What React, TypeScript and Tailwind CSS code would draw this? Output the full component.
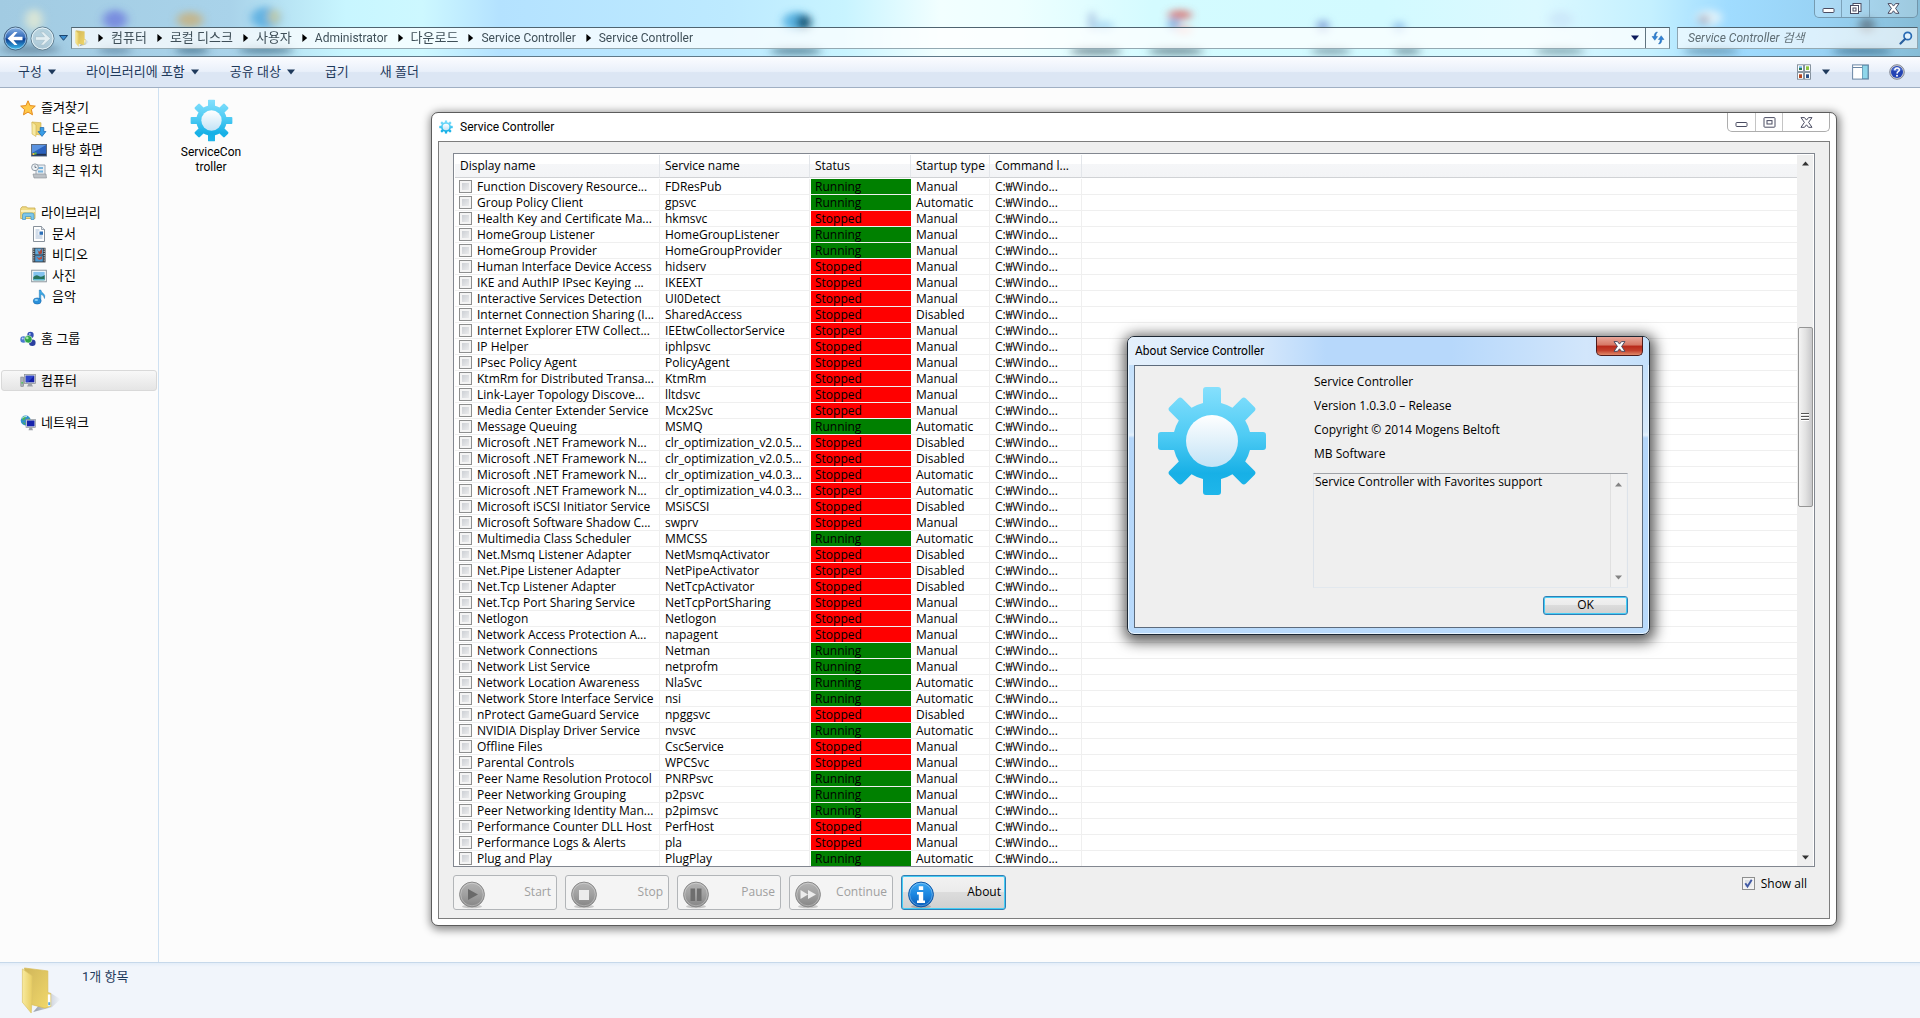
import React, { useId, useState } from "react";

const UI_FONT = "font-[Roboto,'Noto_Sans_CJK_KR',sans-serif]";
const LIST_FONT = "font-['Open_Sans','Noto_Sans_CJK_KR',sans-serif]";

type State = "R" | "S";
type Startup = "M" | "A" | "D";
const STARTUP = { M: "Manual", A: "Automatic", D: "Disabled" };

const SERVICES: [string, string, State, Startup][] = [
  ["Function Discovery Resource...", "FDResPub", "R", "M"],
  ["Group Policy Client", "gpsvc", "R", "A"],
  ["Health Key and Certificate Ma...", "hkmsvc", "S", "M"],
  ["HomeGroup Listener", "HomeGroupListener", "R", "M"],
  ["HomeGroup Provider", "HomeGroupProvider", "R", "M"],
  ["Human Interface Device Access", "hidserv", "S", "M"],
  ["IKE and AuthIP IPsec Keying ...", "IKEEXT", "S", "M"],
  ["Interactive Services Detection", "UI0Detect", "S", "M"],
  ["Internet Connection Sharing (I...", "SharedAccess", "S", "D"],
  ["Internet Explorer ETW Collect...", "IEEtwCollectorService", "S", "M"],
  ["IP Helper", "iphlpsvc", "S", "M"],
  ["IPsec Policy Agent", "PolicyAgent", "S", "M"],
  ["KtmRm for Distributed Transa...", "KtmRm", "S", "M"],
  ["Link-Layer Topology Discove...", "lltdsvc", "S", "M"],
  ["Media Center Extender Service", "Mcx2Svc", "S", "M"],
  ["Message Queuing", "MSMQ", "R", "A"],
  ["Microsoft .NET Framework N...", "clr_optimization_v2.0.5...", "S", "D"],
  ["Microsoft .NET Framework N...", "clr_optimization_v2.0.5...", "S", "D"],
  ["Microsoft .NET Framework N...", "clr_optimization_v4.0.3...", "S", "A"],
  ["Microsoft .NET Framework N...", "clr_optimization_v4.0.3...", "S", "A"],
  ["Microsoft iSCSI Initiator Service", "MSiSCSI", "S", "D"],
  ["Microsoft Software Shadow C...", "swprv", "S", "M"],
  ["Multimedia Class Scheduler", "MMCSS", "R", "A"],
  ["Net.Msmq Listener Adapter", "NetMsmqActivator", "S", "D"],
  ["Net.Pipe Listener Adapter", "NetPipeActivator", "S", "D"],
  ["Net.Tcp Listener Adapter", "NetTcpActivator", "S", "D"],
  ["Net.Tcp Port Sharing Service", "NetTcpPortSharing", "S", "M"],
  ["Netlogon", "Netlogon", "S", "M"],
  ["Network Access Protection A...", "napagent", "S", "M"],
  ["Network Connections", "Netman", "R", "M"],
  ["Network List Service", "netprofm", "R", "M"],
  ["Network Location Awareness", "NlaSvc", "R", "A"],
  ["Network Store Interface Service", "nsi", "R", "A"],
  ["nProtect GameGuard Service", "npggsvc", "S", "D"],
  ["NVIDIA Display Driver Service", "nvsvc", "R", "A"],
  ["Offline Files", "CscService", "S", "M"],
  ["Parental Controls", "WPCSvc", "S", "M"],
  ["Peer Name Resolution Protocol", "PNRPsvc", "R", "M"],
  ["Peer Networking Grouping", "p2psvc", "R", "M"],
  ["Peer Networking Identity Man...", "p2pimsvc", "R", "M"],
  ["Performance Counter DLL Host", "PerfHost", "S", "M"],
  ["Performance Logs & Alerts", "pla", "S", "M"],
  ["Plug and Play", "PlugPlay", "R", "A"],
];

function Gear({ className }: { className: string }) {
  const id = useId();
  return (
    <svg viewBox="-55 -55 110 110" className={className} aria-hidden="true">
      <defs>
        <linearGradient id={id + "g"} gradientUnits="userSpaceOnUse" x1="0" y1="-54" x2="0" y2="54">
          <stop offset="0" stopColor="#86e0fd" />
          <stop offset="0.45" stopColor="#4ecbf4" />
          <stop offset="0.8" stopColor="#17b0e6" />
          <stop offset="1" stopColor="#1fb6ea" />
        </linearGradient>
        <linearGradient id={id + "h"} x1="0" y1="0" x2="0" y2="1">
          <stop offset="0" stopColor="#ffffff" />
          <stop offset="1" stopColor="#c3e3f6" />
        </linearGradient>
        <clipPath id={id + "c"}>
          <circle r="39" />
          {[0, 45, 90, 135].map((a) => (
            <rect key={a} x="-9" y="-54" width="18" height="108" rx="3" transform={`rotate(${a})`} />
          ))}
        </clipPath>
      </defs>
      <rect x="-55" y="-55" width="110" height="110" fill={`url(#${id}g)`} clipPath={`url(#${id}c)`} />
      <circle r="26" fill={`url(#${id}h)`} />
    </svg>
  );
}

function FolderIcon({ className }: { className: string }) {
  const id = useId();
  return (
    <svg viewBox="0 0 40 48" className={className} aria-hidden="true">
      <defs>
        <linearGradient id={id + "a"} x1="0" y1="0" x2="1" y2="0">
          <stop offset="0" stopColor="#f8ea9e" />
          <stop offset="1" stopColor="#e8cd62" />
        </linearGradient>
        <linearGradient id={id + "b"} x1="0" y1="0" x2="1" y2="1">
          <stop offset="0" stopColor="#d0b65a" />
          <stop offset="1" stopColor="#f2d96b" />
        </linearGradient>
        <linearGradient id={id + "s"} x1="0" y1="0" x2="1" y2="0">
          <stop offset="0" stopColor="#7f8896" stopOpacity=".8" />
          <stop offset="1" stopColor="#7f8896" stopOpacity="0" />
        </linearGradient>
      </defs>
      <path d="M12 46 31 41 40 33 29 26z" fill={`url(#${id}s)`} />
      <path d="M3 1 27 4v22l3 1v13l-6 2-15-4z" fill={`url(#${id}b)`} stroke="#d9bd55" strokeWidth=".7" />
      <path d="M1 2 11 9v22l-1 16L1 36z" fill={`url(#${id}a)`} stroke="#dcc566" strokeWidth=".7" />
      <rect x="27" y="28" width="2.6" height="12" fill="#fff" />
      <rect x="27.4" y="36" width="2" height="3" fill="#55a7e0" />
    </svg>
  );
}

function Triangle({ className, dir = "down" }: { className: string; dir?: "down" | "up" | "right" }) {
  const d = dir === "down" ? "M0 2h10L5 8z" : dir === "up" ? "M0 8h10L5 2z" : "M3 0v10l6-5z";
  return (
    <svg viewBox="0 0 10 10" className={className} aria-hidden="true">
      <path d={d} fill="currentColor" />
    </svg>
  );
}

const NAV_ICONS: Record<string, React.ReactNode> = {
  star: <path d="M8 .8l2.1 4.8 5.2.5-3.9 3.5 1.1 5.2L8 12.1l-4.5 2.7 1.1-5.2L.7 6.1l5.2-.5z" fill="#ffc94a" stroke="#e58a1c" strokeWidth="1" />,
  download: (
    <>
      <path d="M1 1l9 .7V14l-8-1z" fill="#ecd272" stroke="#c9a941" strokeWidth=".6" />
      <path d="M1 1l4 3v11.5L1 13z" fill="#f8eaa2" stroke="#cfb452" strokeWidth=".6" />
      <path d="M9.200 6.500h3.600v4H15L11 15.400 7 10.500h2.200z" fill="#3a9de6" stroke="#1a66ac" strokeWidth=".7" />
    </>
  ),
  desktop: (
    <>
      <rect x=".5" y="2.500" width="15" height="11.500" fill="#2b62bd" stroke="#5d6a7c" />
      <path d="M1 3h14L1 11z" fill="#5b93e0" />
      <rect x="1" y="11.800" width="14" height="1.800" fill="#22334f" />
      <path d="M1.500 11h2v2h-2z" fill="#f0c040" />
      <path d="M3.500 10.500h2v2h-2z" fill="#5cc04a" />
    </>
  ),
  recent: (
    <>
      <path d="M5 2h9v10H5z" fill="#e9eef3" stroke="#8996a3" strokeWidth=".8" />
      <path d="M7 4h5v2H7zM7 7.500h5v2H7z" fill="#76b2dc" />
      <path d="M2 11h13l.5 4H3z" fill="#bcc1c6" stroke="#868d94" strokeWidth=".6" />
      <circle cx="4" cy="4.300" r="3.400" fill="#edf2f6" stroke="#8a949e" strokeWidth=".9" />
      <path d="M4 2.500v2h1.500" fill="none" stroke="#55606c" strokeWidth=".8" />
    </>
  ),
  library: (
    <>
      <path d="M.7 3.500 2 1.800h4.500L7.500 3H15v10.500H.7z" fill="#f1dc86" stroke="#c8a94a" strokeWidth=".8" />
      <path d="M1 5h14v2H1z" fill="#faf0bd" />
      <path d="M2.500 14.500V10q0-2 2-2h7.500q2 0 2 2v4.500h-3V11.500H5.500v3z" fill="#7cc6ea" stroke="#4392bd" strokeWidth=".7" />
    </>
  ),
  doc: (
    <>
      <path d="M2.500.5h8l3 3v12h-11z" fill="#fff" stroke="#7a8490" strokeWidth=".9" />
      <path d="M10.500.5v3h3" fill="#dfe6ec" stroke="#7a8490" strokeWidth=".7" />
      <path d="M4.500 4h4M4.500 6h3M4.500 8h3M4.500 10h7M4.500 12h7" stroke="#9bb2cf" strokeWidth=".9" />
      <rect x="8.500" y="5.500" width="3.500" height="3.300" fill="#2d6fb8" />
    </>
  ),
  video: (
    <>
      <rect x="1.500" y=".8" width="13" height="14.600" fill="#30363e" />
      <rect x="4.200" y="1.500" width="7.600" height="6" fill="#5fabdc" />
      <rect x="4.200" y="8.500" width="7.600" height="6" fill="#4a99d2" />
      <path d="M6 1.500 8 5l3-3.500v5L8 7.500z" fill="#a9473a" />
      <path d="M5 9.500l3 1.500 3-2v3l-3 1z" fill="#b45042" />
      <path d="M2.800 1.500v13.500M13.200 1.500v13.500" stroke="#e8eef2" strokeWidth="1" strokeDasharray="1.200 1" />
    </>
  ),
  photo: (
    <>
      <rect x=".7" y="2.200" width="14.600" height="11.600" fill="#fff" stroke="#7f8a94" strokeWidth=".9" />
      <rect x="2.300" y="3.800" width="11.400" height="8.400" fill="#83c3ee" />
      <path d="M2.300 9q3-3 5.500-1t5.900-1v5.200H2.300z" fill="#27735c" />
      <path d="M2.300 11h11.400v1.200H2.300z" fill="#5cb6cf" />
    </>
  ),
  music: (
    <>
      <path d="M8.300 1h1.500q.3 2 2.500 3.500t1.200 5q-.4-3.500-3.700-4.300V12H8.300z" fill="#3aa6e4" stroke="#1f78b8" strokeWidth=".5" />
      <ellipse cx="6.200" cy="12" rx="4" ry="3.100" fill="#2a90da" stroke="#1763a4" strokeWidth=".5" />
      <ellipse cx="5.300" cy="11" rx="1.800" ry="1" fill="#8fd4f7" />
    </>
  ),
  homegroup: (
    <>
      <circle cx="10.500" cy="4" r="3.200" fill="#3450b4" />
      <circle cx="3.500" cy="8.500" r="3.200" fill="#4a78d0" />
      <circle cx="12.300" cy="11.800" r="3.300" fill="#2b40a0" />
      <circle cx="8.300" cy="8.300" r="3.800" fill="#2fa64a" stroke="#e9f6ec" strokeWidth=".6" />
      <circle cx="7.300" cy="7" r="1.300" fill="#a8e8a4" />
      <circle cx="9.800" cy="3" r="1" fill="#a9bdf2" />
      <circle cx="2.700" cy="7.500" r="1" fill="#c4d6f8" />
    </>
  ),
  computer: (
    <>
      <rect x=".8" y="4" width="2.800" height="9.500" fill="#a9b0b6" stroke="#70777d" strokeWidth=".5" />
      <rect x="1.500" y="9" width="1.300" height="1.600" fill="#3ecb4c" />
      <rect x="4.500" y="1.500" width="11" height="9" fill="#d3d7db" stroke="#83898f" strokeWidth=".7" />
      <rect x="5.700" y="2.700" width="8.600" height="6.600" fill="#1420a8" />
      <path d="M5.700 2.700h8.600L8 9.300H5.700z" fill="#3f5fe0" opacity=".6" />
      <path d="M8.500 10.500h3l1.500 3H7z" fill="#9ea3a8" />
    </>
  ),
  network: (
    <>
      <circle cx="5.700" cy="5.500" r="5" fill="#2f8ed0" />
      <path d="M2 3q2-2.500 4.500-2L5 4 3 6zM6.500 5l3-2 1 3-3 3zM2 7l3 1v2z" fill="#46b552" />
      <path d="M1.500 3.500Q4 1 7 1.500" stroke="#c9ecf8" fill="none" strokeWidth=".9" />
      <rect x="6" y="4.500" width="9.500" height="8" fill="#d3d9df" stroke="#7f878f" strokeWidth=".6" />
      <rect x="7" y="5.500" width="7.500" height="5.800" fill="#1724ad" />
      <path d="M9.500 12.500h2.500l1 2.800H8.500z" fill="#9aa1a8" />
    </>
  ),
};

const NAV: ([string, string, 0 | 1] | null)[] = [
  ["star", "즐겨찾기", 0],
  ["download", "다운로드", 1],
  ["desktop", "바탕 화면", 1],
  ["recent", "최근 위치", 1],
  null,
  ["library", "라이브러리", 0],
  ["doc", "문서", 1],
  ["video", "비디오", 1],
  ["photo", "사진", 1],
  ["music", "음악", 1],
  null,
  ["homegroup", "홈 그룹", 0],
  null,
  ["computer", "컴퓨터", 0],
  null,
  ["network", "네트워크", 0],
];

function Sidebar() {
  return (
    <nav className="w-[159px] shrink-0 border-r border-[#cfe1f2] pt-[9px] text-[13px] text-black">
      <ul>
        {NAV.map((item, i) =>
          item ? (
            <li key={i} className="h-[21px]">
              <a
                href="#"
                className={
                  "mx-px flex h-[21px] items-center gap-[5px] rounded-[3px] border whitespace-nowrap " +
                  (item[2] ? "pl-[29px] " : "pl-[18px] ") +
                  (item[0] === "computer"
                    ? "border-[#d9d9d9] bg-linear-to-b from-[#f8f8f8] to-[#e5e5e5]"
                    : "border-transparent")
                }
              >
                <svg viewBox="0 0 16 16" className="size-4 shrink-0" aria-hidden="true">
                  {NAV_ICONS[item[0]]}
                </svg>
                <span>{item[1]}</span>
              </a>
            </li>
          ) : (
            <li key={i} className="h-[21px]" aria-hidden="true" />
          ),
        )}
      </ul>
    </nav>
  );
}

/* Blurred desktop that shows through the glass title bar. */
function Glass() {
  const spots: [number, number, number, number, string][] = [
    [34, 20, 9, 11, "#e8ecd2"],
    [115, 20, 12, 10, "#6b78dc"],
    [190, 20, 13, 8, "#cbae72"],
    [266, 18, 15, 11, "#4aa5dd"],
    [274, 17, 5, 8, "#e6d488"],
    [797, 22, 14, 10, "#3aa0d8"],
    [804, 23, 7, 8, "#0a3550"],
    [1092, 22, 3, 11, "#8fa8d4"],
    [1104, 27, 10, 6, "#a4d4f2"],
    [1180, 15, 12, 5, "#d8605c"],
    [1174, 25, 6, 7, "#6f9ed8"],
    [1184, 31, 8, 5, "#f4b0a8"],
    [1323, 27, 6, 7, "#7392d0"],
    [1399, 28, 6, 6, "#7fb0e4"],
    [1561, 20, 12, 9, "#c9e4f8"],
    [1709, 18, 13, 8, "#f0f7fa"],
    [1704, 20, 5, 5, "#9b9bb0"],
    [1867, 26, 8, 8, "#5b6f7c"],
    [30, 50, 30, 4, "#5b7a92"],
    [115, 51, 17, 4, "#5f86a2"],
    [192, 51, 17, 4, "#3f6884"],
    [266, 51, 28, 4, "#3f6884"],
    [796, 52, 26, 4, "#3d6a80"],
    [1096, 52, 26, 4, "#56707c"],
    [1176, 52, 28, 4, "#56707c"],
    [1331, 52, 20, 4, "#6f8f9c"],
    [1407, 52, 14, 4, "#5f8190"],
    [1560, 52, 25, 4, "#6f949f"],
    [1711, 52, 28, 4, "#5d8ba6"],
    [1862, 52, 30, 4, "#3f6f8c"],
  ];
  return (
    <div className="absolute inset-0 overflow-hidden bg-[linear-gradient(90deg,#a2cbe2_0%,#a9d3ea_12%,#c8f6ff_18%,#cdf8ff_22%,#b4e2ff_26%,#bdeaff_38%,#c8f4ff_44%,#f2ffff_49%,#eeffff_53%,#d4fbff_60%,#d2faff_72%,#dcf9ff_80%,#c4f0ff_86%,#a0dcff_90%,#98d2f4_95%,#86bcd6_100%)]">
      <svg className="h-full w-full" viewBox="0 0 1920 57" preserveAspectRatio="none" aria-hidden="true">
        <defs>
          <filter id="glass-blur" x="-50%" y="-50%" width="200%" height="200%">
            <feGaussianBlur stdDeviation="4" />
          </filter>
        </defs>
        <g filter="url(#glass-blur)">
          {spots.map(([cx, cy, rx, ry, fill], i) => (
            <ellipse key={i} cx={cx} cy={cy} rx={rx} ry={ry} fill={fill} opacity=".75" />
          ))}
        </g>
      </svg>
    </div>
  );
}

function WinGlyph({ kind, className = "" }: { kind: "min" | "max" | "restore" | "close"; className?: string }) {
  return (
    <svg viewBox="0 0 13 11" className={"h-[11px] w-[13px] " + className} aria-hidden="true">
      <g fill="#fff" stroke="#4a4c62" strokeWidth="1">
        {kind === "min" && <rect x="1" y="5.500" width="11" height="4" rx=".8" />}
        {kind === "max" && (
          <>
            <rect x="1" y=".6" width="11" height="9.600" rx=".8" />
            <rect x="4" y="3.600" width="5" height="3.400" />
          </>
        )}
        {kind === "restore" && (
          <>
            <rect x="4" y=".5" width="8" height="8" />
            <rect x="1.500" y="2.500" width="8" height="8" />
            <rect x="4" y="5" width="3" height="3" />
          </>
        )}
        {kind === "close" && <path d="M1 .6h3.500l2 2.500 2-2.500H12L8.600 5.400 12 10.300H8.500l-2-2.500-2 2.500H1l3.400-4.900z" />}
      </g>
    </svg>
  );
}

const CRUMBS: [string, boolean][] = [
  ["컴퓨터", true],
  ["로컬 디스크", true],
  ["사용자", true],
  ["Administrator", false],
  ["다운로드", true],
  ["Service Controller", false],
  ["Service Controller", false],
];

function AddressBar() {
  return (
    <header className="relative h-[57px] shrink-0 border-b border-[#5f7888]">
      <Glass />
      <div className="relative">
        <div className="flex h-6 items-start justify-end pr-0.5">
          <div className="flex h-[18px] rounded-b-[5px] border border-t-0 border-[#5e7f93]/70 bg-white/20">
            <button aria-label="최소화" className="flex w-[27px] items-center justify-center border-r border-[#5e7f93]/60">
              <WinGlyph kind="min" />
            </button>
            <button aria-label="이전 크기로 복원" className="flex w-[28px] items-center justify-center border-r border-[#5e7f93]/60">
              <WinGlyph kind="restore" />
            </button>
            <button aria-label="닫기" className="flex w-[47px] items-center justify-center">
              <WinGlyph kind="close" />
            </button>
          </div>
        </div>
        <div className="flex h-7 items-center pr-0.5 pl-[3px]">
          <button aria-label="뒤로" className="size-[25px]">
            <svg viewBox="0 0 25 25" className="size-full">
              <defs>
                <linearGradient id="back-fill" x1="0" y1="0" x2="0" y2="1">
                  <stop offset="0" stopColor="#8fb8e8" />
                  <stop offset=".48" stopColor="#2a62b4" />
                  <stop offset=".52" stopColor="#0a3a8e" />
                  <stop offset="1" stopColor="#3fc4f4" />
                </linearGradient>
              </defs>
              <circle cx="12.500" cy="12.500" r="11.500" fill="url(#back-fill)" stroke="#46627c" />
              <circle cx="12.500" cy="12.500" r="10.500" fill="none" stroke="#cfe6f8" strokeOpacity=".6" />
              <path d="M4.500 12.500 11.500 6h3l-4 4.700h9v3.600h-9l4 4.700h-3z" fill="#fff" />
            </svg>
          </button>
          <button aria-label="앞으로" className="ml-0.5 size-[25px]">
            <svg viewBox="0 0 25 25" className="size-full">
              <circle cx="12.500" cy="12.500" r="11.500" fill="#b9d2dc" fillOpacity=".75" stroke="#5f7c8e" />
              <circle cx="12.500" cy="12.500" r="10.500" fill="none" stroke="#e4f1f6" />
              <path d="M20.500 12.500 13.500 6h-3l4 4.700h-9v3.600h9l-4 4.700h3z" fill="#e3eef2" stroke="#a5bcc8" strokeWidth=".6" />
            </svg>
          </button>
          <button aria-label="최근 페이지" className="ml-1 w-[9px]">
            <svg viewBox="0 0 9 6" className="h-1.5 w-[9px]">
              <path d="M.5.5h8l-4 4.800z" fill="#3c8ed0" stroke="#123a64" strokeWidth=".9" />
            </svg>
          </button>
          <div className="ml-[3px] flex h-[22px] min-w-0 flex-1 items-center border border-t-[#4f6470] border-r-[#6f8792] border-b-[#93a9b2] border-l-[#6f8792] bg-white/75">
            <FolderIcon className="ml-[3px] h-[17px] w-[14px]" />
            <nav aria-label="주소" className="flex min-w-0 flex-1 items-center text-[#3f4f58]">
              {CRUMBS.map(([label, ko], i) => (
                <React.Fragment key={i}>
                  <Triangle dir="right" className={i === 0 ? "mr-[7px] ml-[7px] size-2 text-black" : "mr-[7px] ml-2 size-2 text-black"} />
                  <a href="#" className={"whitespace-nowrap " + (ko ? "text-[13px]" : "text-[12px]")}>
                    {label}
                  </a>
                </React.Fragment>
              ))}
            </nav>
            <button aria-label="이전 위치" className="flex w-5 justify-center">
              <Triangle className="size-2 text-[#0b1a5c]" />
            </button>
            <button aria-label="새로 고침" className="flex h-full w-6 items-center justify-center border-l border-[#5f7480]">
              <svg viewBox="0 0 14 14" className="size-[14px]" fill="#2f82d8" stroke="#155a9f" strokeWidth=".4">
                <path d="M6.500 1Q3.200 1 3.100 5.500H1L3.800 9.300 6.600 5.500H4.700Q4.700 2.800 6.500 1z" />
                <path d="M7.500 13q3.300 0 3.400-4.500H13L10.200 4.700 7.400 8.500h1.900q0 2.700-1.800 4.500z" />
              </svg>
            </button>
          </div>
          <form role="search" className="ml-[7px] flex h-[22px] w-[241px] items-center border border-t-[#4f6470] border-r-[#8fa6b2] border-b-[#93a9b2] border-l-[#8fa6b2] bg-white/65 pr-1 pl-[10px]">
            <input
              type="text"
              aria-label="Service Controller 검색"
              placeholder="Service Controller 검색"
              className="min-w-0 flex-1 bg-transparent text-[12px] italic outline-none placeholder:text-[#5f6d74]"
            />
            <svg viewBox="0 0 14 14" className="size-[14px]" fill="none" aria-hidden="true">
              <circle cx="8.700" cy="5" r="3.700" stroke="#2a6cb4" strokeWidth="1.700" fill="#e2f2fc" />
              <path d="M6 8 1.500 12.500" stroke="#2a5f9e" strokeWidth="2.200" strokeLinecap="round" />
            </svg>
          </form>
        </div>
      </div>
    </header>
  );
}

function Toolbar() {
  return (
    <div className="flex h-[31px] shrink-0 items-center border-b border-[#a0afc3] bg-[linear-gradient(180deg,#fbfcff_0%,#e9f0fa_48%,#dce6f4_52%,#dce6f4_100%)] pr-[15px] pl-[18px] text-[13px] whitespace-nowrap text-[#1e395b]">
      <button className="flex items-center gap-1.5">
        구성
        <Triangle className="size-2" />
      </button>
      <button className="ml-[30px] flex items-center gap-1.5">
        라이브러리에 포함
        <Triangle className="size-2" />
      </button>
      <button className="ml-[31px] flex items-center gap-1.5">
        공유 대상
        <Triangle className="size-2" />
      </button>
      <button className="ml-[30px]">굽기</button>
      <button className="ml-[31px]">새 폴더</button>
      <div className="flex-1" />
      <button aria-label="보기 변경" className="flex items-center gap-[10px]">
        <svg viewBox="0 0 16 16" className="size-4" aria-hidden="true">
          <g fill="#fff" stroke="#7b8894" strokeWidth=".9">
            <rect x="1.500" y=".8" width="6" height="6.600" />
            <rect x="8.500" y=".8" width="6" height="6.600" />
            <rect x="1.500" y="8.600" width="6" height="6.600" />
            <rect x="8.500" y="8.600" width="6" height="6.600" />
          </g>
          <path d="M3 4h3v2H3z" fill="#2a7a58" />
          <path d="M3 2.300h3V4H3z" fill="#6fb8ea" />
          <path d="M10 2.300h3V6h-3z" fill="#8cc63e" />
          <path d="M3 10.300h3V14H3z" fill="#b6441e" />
          <path d="M10 10.300h3V14h-3z" fill="#2a4f86" />
        </svg>
        <Triangle className="size-2" />
      </button>
      <button aria-label="미리 보기 창" className="ml-[22px]">
        <svg viewBox="0 0 17 16" className="h-4 w-[17px]" aria-hidden="true">
          <rect x=".6" y=".9" width="15.800" height="14.200" fill="#fff" stroke="#6a86a4" strokeWidth="1" />
          <path d="M1 3.500h9.500" stroke="#6a86a4" />
          <rect x="10.500" y="1.400" width="5.400" height="13.200" fill="#8fd6ea" stroke="#5b93b0" strokeWidth=".8" />
        </svg>
      </button>
      <button aria-label="도움말" className="ml-5">
        <svg viewBox="0 0 16 16" className="size-4" aria-hidden="true">
          <circle cx="8" cy="8" r="7.300" fill="#c9cdd6" stroke="#7a7f8c" strokeWidth=".9" />
          <circle cx="8" cy="8" r="6" fill="#2343b4" />
          <path d="M3 6a5.500 5 0 0 1 10 0q-5 2.500-10 0z" fill="#6a8ae0" opacity=".7" />
          <path d="M5.800 6.200q.1-2.200 2.300-2.200t2.200 1.900q0 1.100-1.100 1.700T8 9.600" fill="none" stroke="#fff" strokeWidth="1.500" />
          <circle cx="8" cy="11.800" r="1" fill="#fff" />
        </svg>
      </button>
    </div>
  );
}

function RowCheck({ label }: { label: string }) {
  return (
    <input
      type="checkbox"
      aria-label={label}
      className="size-[13px] shrink-0 appearance-none border border-[#8e8f8f] bg-linear-to-br from-[#c3c7cd] to-[#f4f4f4] outline-2 -outline-offset-3 outline-[#f4f4f4]"
    />
  );
}

const COLUMNS: [string, string][] = [
  ["Display name", "w-[205px]"],
  ["Service name", "w-[150px]"],
  ["Status", "w-[101px]"],
  ["Startup type", "w-[79px]"],
  ["Command l...", "w-[92px]"],
];

function ServiceTable() {
  const cell = "h-4 border-r border-b border-[#efefef] p-0 pl-[5px] leading-[15px]";
  return (
    <table className="w-full table-fixed border-separate border-spacing-0 text-[12px] text-black">
      <thead>
        <tr>
          {COLUMNS.map(([name, width]) => (
            <th key={name} scope="col" className={"p-0 pb-px text-left font-normal " + width}>
              <div className="flex h-[23px] items-center border-r border-b border-r-[#e3e6ea] border-b-[#d0d2d5] bg-[linear-gradient(180deg,#fff_40%,#f5f6f8_42%,#f3f4f6_100%)] pl-[5px]">
                {name}
              </div>
            </th>
          ))}
          <th className="p-0 pb-px">
            <div className="h-[23px] border-b border-[#d0d2d5] bg-[linear-gradient(180deg,#fff_40%,#f5f6f8_42%,#f3f4f6_100%)]" />
          </th>
        </tr>
      </thead>
      <tbody className="whitespace-nowrap">
        {SERVICES.map(([display, service, state, startup], i) => (
          <tr key={i}>
            <td className="h-4 border-r border-b border-[#efefef] p-0 pl-1">
              <div className="flex h-[15px] items-center gap-[5px]">
                <RowCheck label={display} />
                {display}
              </div>
            </td>
            <td className={cell}>{service}</td>
            <td
              className={
                "h-4 border-b border-l border-[#efefef] border-l-white bg-clip-padding p-0 pl-1 leading-[15px] " +
                (state === "R" ? "bg-[#008000]" : "bg-[#ff0000]")
              }
            >
              {state === "R" ? "Running" : "Stopped"}
            </td>
            <td className={cell}>{STARTUP[startup]}</td>
            <td className={cell}>C:₩Windo...</td>
            <td className="h-4 border-b border-[#efefef] p-0" />
          </tr>
        ))}
      </tbody>
    </table>
  );
}

function ScrollBar() {
  return (
    <div className="flex w-4 shrink-0 flex-col items-center bg-[#efefef]" role="scrollbar" aria-controls="services" aria-valuenow={30}>
      <div className="flex h-[17px] items-center">
        <Triangle dir="up" className="size-[7px] text-[#333]" />
      </div>
      <div className="flex-[155]" />
      <div className="flex w-[15px] flex-[178] flex-col items-center justify-center gap-px rounded-[2px] border border-[#959595] bg-linear-to-r from-[#f4f4f4] via-[#e2e2e2] to-[#c8c8ca]">
        <div className="h-0.5 w-2 border-b border-white bg-[#555]" />
        <div className="h-0.5 w-2 border-b border-white bg-[#555]" />
        <div className="h-0.5 w-2 border-b border-white bg-[#555]" />
      </div>
      <div className="flex-[343]" />
      <div className="flex h-[17px] items-center">
        <Triangle className="size-[7px] text-[#333]" />
      </div>
    </div>
  );
}

function RoundIcon({ kind }: { kind: "start" | "stop" | "pause" | "continue" | "info" }) {
  const id = useId();
  const blue = kind === "info";
  return (
    <svg viewBox="0 0 28 28" className="mt-[3px] size-7 shrink-0" aria-hidden="true">
      <defs>
        <linearGradient id={id} x1="0" y1="0" x2="0" y2="1">
          <stop offset="0" stopColor={blue ? "#3ea8f2" : "#b4b4b4"} />
          <stop offset=".5" stopColor={blue ? "#1b86e0" : "#a0a0a0"} />
          <stop offset="1" stopColor={blue ? "#0a5cb8" : "#858585"} />
        </linearGradient>
      </defs>
      <ellipse cx="14" cy="25.500" rx="10" ry="1.800" fill="#000" opacity=".18" />
      <circle cx="14" cy="13.500" r="12.400" fill={`url(#${id})`} stroke={blue ? "#0d56a6" : "#8a8a8a"} />
      <circle cx="14" cy="13.500" r="11.300" fill="none" stroke="#fff" strokeOpacity=".3" />
      {kind === "start" && <path d="M10 8v11l10-5.500z" fill="#6a6a6a" />}
      {kind === "stop" && <rect x="9" y="9" width="10" height="10" fill="#ececec" />}
      {kind === "pause" && <path d="M8.500 7.500h4.500v12.500H8.500zM15 7.500h4.500v12.500H15z" fill="#6e6e6e" />}
      {kind === "continue" && <path d="M6.500 9v9l7.500-4.500zM14 9v9l8-4.500z" fill="#ececec" />}
      {kind === "info" && (
        <path d="M11.800 5.200h4.400v3.800h-4.400zM10 11h6.200v8.500H18V22h-8v-2.500h1.800v-6H10z" fill="#fff" />
      )}
    </svg>
  );
}

const ACTIONS: ["start" | "stop" | "pause" | "continue", string][] = [
  ["start", "Start"],
  ["stop", "Stop"],
  ["pause", "Pause"],
  ["continue", "Continue"],
];

function ServiceWindow() {
  const [showAll, setShowAll] = useState(true);
  return (
    <section
      aria-label="Service Controller"
      className="absolute top-[112px] right-[83px] bottom-[92px] left-[431px] flex flex-col rounded-[7px] border border-[#5c5c5c] bg-white px-1.5 pb-1.5 shadow-[1px_2px_9px_2px_rgba(0,0,0,0.45)]"
    >
      <div className="flex h-7 shrink-0 items-start justify-between">
        <h1 className="flex h-7 items-center gap-[7px] text-[12px] text-black">
          <Gear className="ml-px size-[14px]" />
          Service Controller
        </h1>
        <div className="flex h-[19px] rounded-b-[5px] border border-t-0 border-[#adadad] bg-white">
          <button aria-label="최소화" className="flex w-7 items-center justify-center border-r border-[#c4c4c4]">
            <WinGlyph kind="min" />
          </button>
          <button aria-label="최대화" className="flex w-[27px] items-center justify-center border-r border-[#c4c4c4]">
            <WinGlyph kind="max" />
          </button>
          <button aria-label="닫기" className="flex w-[46px] items-center justify-center">
            <WinGlyph kind="close" />
          </button>
        </div>
      </div>
      <div className={"flex min-h-0 flex-1 flex-col border border-[#7d7d7d] bg-[#efefef] px-[14px] pt-[11px] pb-2 " + LIST_FONT}>
        <div className="flex min-h-0 flex-1 border border-[#828790] bg-white px-px pt-px">
          <div id="services" className="min-w-0 flex-1 overflow-hidden">
            <ServiceTable />
          </div>
          <ScrollBar />
        </div>
        <div className="mt-2 flex shrink-0 items-start gap-2 text-[12px]">
          {ACTIONS.map(([kind, label]) => (
            <button
              key={kind}
              disabled
              className="flex h-[35px] w-[104px] items-start justify-between rounded-[3px] border border-[#b2b5b8] bg-[#f4f4f4] pt-0.5 pr-[5px] pl-1 text-[#a0a0a0]"
            >
              <RoundIcon kind={kind} />
              <span className="mt-1.5 leading-4">{label}</span>
            </button>
          ))}
          <button className="flex h-[35px] w-[105px] items-start justify-between rounded-[3px] border border-[#2f7fb6] bg-[linear-gradient(180deg,#f2f2f2_0%,#ebebeb_48%,#dcdcdc_50%,#d0d0d0_100%)] pt-0.5 pr-1 pl-[5px] text-black ring-1 ring-[#45cdf5] ring-inset">
            <RoundIcon kind="info" />
            <span className="mt-1.5 leading-4">About</span>
          </button>
          <div className="flex-1" />
          <label className="flex h-[17px] items-center gap-1.5 pr-2 text-black">
            <span className="relative flex size-[13px]">
              <input
                type="checkbox"
                checked={showAll}
                onChange={() => setShowAll(!showAll)}
                className="peer size-[13px] appearance-none border border-[#8e8f8f] bg-linear-to-br from-[#d4d8de] to-[#f4f4f4] outline-2 -outline-offset-3 outline-[#f4f4f4]"
              />
              <svg viewBox="0 0 13 13" className="pointer-events-none absolute inset-0 hidden size-[13px] peer-checked:block" aria-hidden="true">
                <path d="M3.300 6.200 5.500 9.500 9.700 2.800" fill="none" stroke="#4059a4" strokeWidth="1.900" />
              </svg>
            </span>
            Show all
          </label>
        </div>
      </div>
    </section>
  );
}

function AboutDialog() {
  return (
    <section
      role="dialog"
      aria-label="About Service Controller"
      className="absolute top-[336px] left-[1127px] w-[523px] rounded-[7px] border border-[#1c2733] bg-[linear-gradient(180deg,#dcebfb_0%,#bcdcfa_6%,#c4e0fb_10%,#d6e9fb_32%,#e4f1fd_33%,#b4d6fa_34%,#b9dafb_100%)] shadow-[1px_3px_14px_4px_rgba(0,0,0,0.65)] ring-1 ring-[#e8f5ff] ring-inset"
    >
      <div className="flex h-[28px] items-start justify-between rounded-t-[6px] bg-[linear-gradient(90deg,#e4f0fc_0%,#d6e8fb_25%,#b7d8fb_38%,#b7d8fb_62%,#d2e6fb_88%,#c4e0fb_100%)] pr-1.5 pl-[7px]">
        <h2 className="flex h-[28px] items-center text-[12px] text-black">About Service Controller</h2>
        <button
          aria-label="Close"
          className="flex h-[19px] w-[47px] items-center justify-center rounded-b-[5px] border border-t-0 border-[#4d1a1a] bg-[linear-gradient(180deg,#e9a79a_0%,#d67765_45%,#b8281a_50%,#c3402c_75%,#e08a6a_100%)]"
        >
          <WinGlyph kind="close" />
        </button>
      </div>
      <div className={"mx-1.5 mb-1.5 grid grid-cols-[178px_1fr] border border-[#5d6b7c] bg-[#efefef] pt-1 pr-[14px] pb-3 text-[12px] text-black " + LIST_FONT}>
        <div className="pt-4 pl-[22px]">
          <Gear className="size-[110px]" />
        </div>
        <div>
          <div className="pl-px leading-6">
            <p>Service Controller</p>
            <p>Version 1.0.3.0 – Release</p>
            <p>Copyright © 2014 Mogens Beltoft</p>
            <p>MB Software</p>
          </div>
          <div className="mt-[7px] flex h-[115px] border border-t-[#a0a3a8] border-r-[#dde3ea] border-b-[#e2e8ee] border-l-[#dde3ea] px-px">
            <textarea
              readOnly
              aria-label="Description"
              defaultValue="Service Controller with Favorites support"
              className="min-w-0 flex-1 resize-none overflow-hidden bg-transparent leading-[15px] outline-none"
            />
            <div className="flex w-4 flex-col items-center justify-between border-l border-[#e0e0e0] bg-[#f1f1f1] pt-[7px] pb-1.5 text-[#848484]" aria-hidden="true">
              <Triangle dir="up" className="size-[7px]" />
              <Triangle className="size-[7px]" />
            </div>
          </div>
          <div className="mt-2 flex justify-end">
            <button className="flex h-[19px] w-[85px] items-center justify-center rounded-[3px] border border-[#2f7fb6] bg-[linear-gradient(180deg,#f2f2f2_0%,#ebebeb_48%,#dcdcdc_50%,#d0d0d0_100%)] pb-0.5 ring-1 ring-[#45cdf5] ring-inset">
              OK
            </button>
          </div>
        </div>
      </div>
    </section>
  );
}

export default function App() {
  return (
    <div className={"relative flex h-screen flex-col overflow-hidden bg-[#fcfcfc] text-black " + UI_FONT}>
      <AddressBar />
      <Toolbar />
      <div className="flex min-h-0 flex-1">
        <Sidebar />
        <main className="flex-1 pt-[11px] pl-[10px]">
          <a href="#" className="flex w-[84px] flex-col items-center text-center text-[12px] leading-[15px]">
            <Gear className="mb-[3px] size-[43px]" />
            <span>
              ServiceCon
              <br />
              troller
            </span>
          </a>
        </main>
      </div>
      <footer className="flex h-[56px] shrink-0 items-start border-t border-[#c6d8ea] bg-[linear-gradient(180deg,#e3edf8_0,#f1f5fb_4px)] pl-5 text-[13px] text-[#1e395b]">
        <FolderIcon className="mt-1 h-[47px] w-[42px]" />
        <span className="mt-1 ml-5">1개 항목</span>
      </footer>
      <ServiceWindow />
      <AboutDialog />
    </div>
  );
}
